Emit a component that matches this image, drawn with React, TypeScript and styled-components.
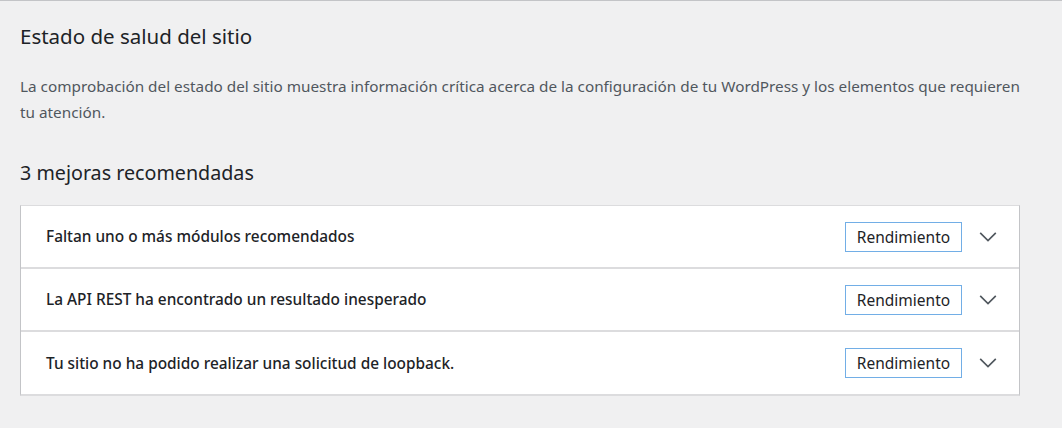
import React from 'react';
import styled, { createGlobalStyle } from 'styled-components';

const GlobalStyle = createGlobalStyle`
  html, body {
    margin: 0;
    padding: 0;
    background: #f0f0f1;
  }
  body {
    font-family: 'Noto Sans', 'Open Sans', sans-serif;
    color: #1d2327;
  }
`;

const issues = [
  'Faltan uno o más módulos recomendados',
  'La API REST ha encontrado un resultado inesperado',
  'Tu sitio no ha podido realizar una solicitud de loopback.',
];

const Page = styled.div`
  border-top: 1px solid #c3c4c7;
  padding: 21px 20px 32px 20px;
  height: 428px;
  box-sizing: border-box;
`;

const Title = styled.h1`
  margin: 0;
  font-size: 20.5px;
  font-weight: 400;
  line-height: 28px;
  color: #1d2327;
`;

const Intro = styled.p`
  margin: 23px 0 0 0;
  font-size: 15.3px;
  line-height: 26px;
  color: #50575e;
  max-width: 1010px;
`;

const Count = styled.h2`
  margin: 34px 0 0 0;
  font-size: 19.7px;
  font-weight: 400;
  line-height: 28px;
  color: #1d2327;
`;

const List = styled.div`
  margin-top: 18px;
  width: 1000px;
  background: #fff;
  border: 1px solid #c3c4c7;
  border-top-color: #dcdcde;
  border-bottom: 2px solid #dcdcde;
  box-sizing: border-box;
`;

const Row = styled.div<{ $last?: boolean }>`
  display: flex;
  align-items: center;
  height: ${({ $last }) => ($last ? '62px' : '63px')};
  padding: 0 19px 0 25px;
  box-sizing: border-box;
  border-bottom: ${({ $last }) => ($last ? 'none' : '2px solid #dcdcde')};
`;

const Label = styled.span`
  flex: 1;
  font-size: 15.4px;
  font-weight: 500;
  color: #1d2327;
`;

const Badge = styled.span`
  display: inline-flex;
  align-items: center;
  justify-content: center;
  width: 117px;
  height: 30px;
  box-sizing: border-box;
  border: 1px solid #72aee6;
  font-size: 15.5px;
  color: #1d2327;
`;

const Toggle = styled.span`
  display: flex;
  align-items: center;
  justify-content: center;
  width: 24px;
  height: 24px;
  margin-left: 14px;
`;

const Chevron = () => (
  <svg width="22" height="22" viewBox="0 0 24 24" fill="none">
    <path d="M3.5 7.5 L12 16 L20.5 7.5" stroke="#50575e" strokeWidth="1.8" />
  </svg>
);

export default function App() {
  return (
    <>
      <GlobalStyle />
      <Page>
        <Title>Estado de salud del sitio</Title>
        <Intro>
          La comprobación del estado del sitio muestra información crítica acerca de la configuración de tu
          WordPress y los elementos que requieren tu atención.
        </Intro>
        <Count>3 mejoras recomendadas</Count>
        <List>
          {issues.map((text, i) => (
            <Row key={text} $last={i === issues.length - 1}>
              <Label>{text}</Label>
              <Badge>Rendimiento</Badge>
              <Toggle>
                <Chevron />
              </Toggle>
            </Row>
          ))}
        </List>
      </Page>
    </>
  );
}
